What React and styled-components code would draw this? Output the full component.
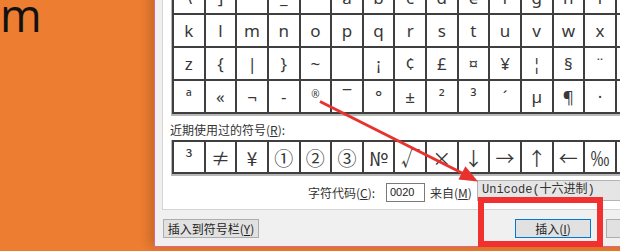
import React from "react";
import styled, { createGlobalStyle } from "styled-components";

const GlobalStyle = createGlobalStyle`
  html, body { margin: 0; padding: 0; background: #ED7D31; overflow: hidden; }
`;

const Stage = styled.div`
  position: relative;
  width: 620px;
  height: 251px;
  overflow: hidden;
  display: flex;
  align-items: flex-start;
  background: #ED7D31;
`;

const SlideText = styled.div`
  flex: none;
  width: 154px;
  font-family: "Open Sans", sans-serif;
  font-size: 45px;
  line-height: 29px;
  color: #111;
`;

const Dialog = styled.div`
  flex: none;
  width: 520px;
  margin-top: -30px;
  background: #f0f0f0;
  border-left: 1px solid #e0678a;
  border-bottom: 1px solid #e0678a;
  box-shadow: -5px 0 10px rgba(0, 0, 0, 0.16);
  display: flex;
  flex-direction: column;
  font-family: "Noto Sans CJK SC", sans-serif;
  font-size: 12px;
  color: #1e1e1e;
`;

const Panel = styled.div`
  margin-left: 7px;
  background: #fff;
  border-left: 1px solid #d5d5d5;
  border-bottom: 1px solid #d5d5d5;
  padding: 10px 0 8px 9px;
  display: flex;
  flex-direction: column;
`;

const SymbolGrid = styled.div`
  display: grid;
  grid-template-columns: repeat(15, 29.64px);
  grid-auto-rows: ${(p) => p.$row}px;
  gap: 2px;
  padding: 2px;
  width: max-content;
  background: #3f3f3f;
  box-shadow: 0 1px 0 1px #b8b8b8;
`;

const Cell = styled.div`
  background: #fff;
  display: flex;
  align-items: ${(p) => (p.$raise ? "flex-start" : "center")};
  padding-top: ${(p) => (p.$raise ? 6 : 0)}px;
  box-sizing: border-box;
  justify-content: center;
  overflow: hidden;
  font-family: ${(p) =>
    p.$recent
      ? `"Noto Sans CJK SC", "DejaVu Sans", sans-serif`
      : `"Noto Sans", "DejaVu Sans", sans-serif`};
  font-size: ${(p) => p.$size || (p.$recent ? 19 : 17)}px;
  color: #383838;
`;

const SectionLabel = styled.div`
  margin: 9px 0 0 -2px;
  line-height: 14px;
  color: #333;
`;

const RecentWrap = styled.div`
  margin-top: 3px;
`;

const CodeRow = styled.div`
  display: flex;
  align-items: flex-start;
  height: 21px;
  margin-top: 6px;
  padding-left: 136px;
`;

const InlineLabel = styled.span`
  flex: none;
  width: ${(p) => p.$w}px;
  margin-top: 6px;
  margin-left: ${(p) => p.$ml || 0}px;
  line-height: 14px;
  white-space: nowrap;
  color: #333;
`;

const CodeBox = styled.div`
  flex: none;
  box-sizing: border-box;
  width: 39px;
  height: 19px;
  margin-top: 3px;
  padding: 0 3px;
  background: #fff;
  border: 1px solid #7a7a7a;
  font-family: "Liberation Sans", sans-serif;
  font-size: 11px;
  line-height: 17px;
  color: #222;
`;

const SelectBox = styled.div`
  flex: none;
  box-sizing: border-box;
  width: 200px;
  height: 21px;
  padding-left: 4px;
  background: #e5e5e5;
  border: 1px solid #b3b3b3;
  font-family: "Liberation Mono", "Noto Sans CJK SC", monospace;
  font-size: 12px;
  line-height: 19px;
  color: #333;
  white-space: nowrap;
`;

const ButtonRow = styled.div`
  display: flex;
  padding: 9px 0 8px 8px;
`;

const Button = styled.div`
  flex: none;
  box-sizing: border-box;
  width: ${(p) => p.$w}px;
  height: 19px;
  margin-left: ${(p) => p.$ml || 0}px;
  background: #e1e1e1;
  border: 1px solid ${(p) => (p.$primary ? "#0078d7" : "#adadad")};
  line-height: 17px;
  text-align: center;
  white-space: nowrap;
  color: #1e1e1e;
`;

const Overlay = styled.svg`
  position: absolute;
  left: 0;
  top: 0;
  width: 620px;
  height: 251px;
  pointer-events: none;
`;

const HighlightBox = styled.div`
  position: absolute;
  left: 478px;
  top: 197px;
  width: 125px;
  height: 50px;
  box-sizing: border-box;
  border: 6px solid #f2302f;
  pointer-events: none;
`;

const rows = [
  ["\\", "]", "^", "_", "`", "a", "b", "c", "d", "e", "f", "g", "h", "i", "j"],
  ["k", "l", "m", "n", "o", "p", "q", "r", "s", "t", "u", "v", "w", "x", "y"],
  ["z", "{", "|", "}", "~", "\u00a0", "¡", "¢", "£", "¤", "¥", "¦", "§", "¨", "©"],
  ["ª", "«", "¬", "-", "®", "¯", "°", "±", "²", "³", "´", "µ", "¶", "·", "¸"],
];

const small = { "®": 10 };

const recent = ["³", "≠", "¥", "①", "②", "③", "№", "√", "×", "↓", "→", "↑", "←", "‰", ""];

export default function App() {
  return (
    <>
      <GlobalStyle />
      <Stage>
        <SlideText>m</SlideText>
        <Dialog>
          <Panel>
            <SymbolGrid $row={31}>
              {rows.flat().map((c, i) => (
                <Cell key={i} $size={small[c]} $raise={!!small[c]}>
                  {c}
                </Cell>
              ))}
            </SymbolGrid>
            <SectionLabel>
              近期使用过的符号(<u>R</u>):
            </SectionLabel>
            <RecentWrap>
              <SymbolGrid $row={30}>
                {recent.map((c, i) => (
                  <Cell key={i} $recent>
                    {c}
                  </Cell>
                ))}
              </SymbolGrid>
            </RecentWrap>
            <CodeRow>
              <InlineLabel $w={78}>
                字符代码(<u>C</u>):
              </InlineLabel>
              <CodeBox>0020</CodeBox>
              <InlineLabel $w={47} $ml={5}>
                来自(<u>M</u>)
              </InlineLabel>
              <SelectBox>Unicode(十六进制)</SelectBox>
            </CodeRow>
          </Panel>
          <ButtonRow>
            <Button $w={96}>
              插入到符号栏(<u>Y</u>)
            </Button>
            <Button $w={76} $ml={256} $primary>
              插入(<u>I</u>)
            </Button>
            <Button $w={76} $ml={15}>
              取消
            </Button>
          </ButtonRow>
        </Dialog>
        <Overlay viewBox="0 0 620 251">
          <line x1="320" y1="101.5" x2="463" y2="173.5" stroke="#e8322e" strokeWidth="3" />
          <polygon points="478,181.5 458.4,179.6 465.4,166.2" fill="#e8322e" />
        </Overlay>
        <HighlightBox />
      </Stage>
    </>
  );
}
